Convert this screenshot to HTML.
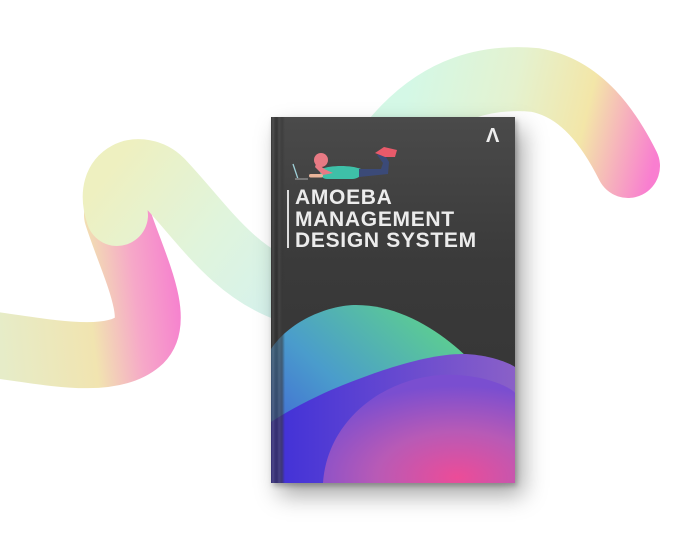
<!DOCTYPE html>
<html><head><meta charset="utf-8"><style>
html,body{margin:0;padding:0;background:#fff;width:694px;height:548px;overflow:hidden;position:relative}
svg{position:absolute;left:0;top:0}
.book{position:absolute;left:271px;top:117px;width:244px;height:366px;background:linear-gradient(180deg,#4a4a4a 0%,#3a3a3a 40%,#333 100%);overflow:hidden;box-shadow:8px 12px 22px rgba(0,0,0,.35),2px 3px 5px rgba(0,0,0,.25)}
.spine{position:absolute;left:0;top:0;width:14px;height:100%;background:linear-gradient(90deg,#2a2a2a 0,#555 2px,#333 4px,#2c2c2c 6px,#4a4a4a 8px,#383838 11px,rgba(60,60,60,0) 14px);z-index:3;opacity:.6}
.title{position:absolute;left:24px;top:70px;color:#ececec;font:bold 21px/21.5px "Liberation Sans",sans-serif;letter-spacing:0.7px;z-index:4}
.bar{position:absolute;left:16px;top:73px;width:2px;height:58px;background:#ddd;z-index:4}
.logo{position:absolute;left:215px;top:8px;color:#eee;font:bold 20px "Liberation Sans",sans-serif;z-index:4}
</style></head><body>
<svg width="694" height="548" viewBox="0 0 694 548">
<defs>
<linearGradient id="g1" gradientUnits="userSpaceOnUse" x1="0" y1="340" x2="185" y2="320">
<stop offset="0" stop-color="#e6ecc8"/><stop offset=".5" stop-color="#f1e4b0"/><stop offset=".75" stop-color="#f6a8c8"/><stop offset="1" stop-color="#f67fcf"/></linearGradient>
<linearGradient id="g2" gradientUnits="userSpaceOnUse" x1="110" y1="170" x2="280" y2="300">
<stop offset="0" stop-color="#eef0c0"/><stop offset=".55" stop-color="#e0f4dc"/><stop offset="1" stop-color="#d6f2ec"/></linearGradient>
<linearGradient id="g3" gradientUnits="userSpaceOnUse" x1="400" y1="120" x2="650" y2="180">
<stop offset="0" stop-color="#d4f8e6"/><stop offset=".4" stop-color="#e4f2d0"/><stop offset=".7" stop-color="#f3e6a8"/><stop offset="1" stop-color="#f97ed0"/></linearGradient>
</defs>
<path d="M-20 343 C40 350,110 368,140 340 C162 318,132 262,117 215" fill="none" stroke="url(#g1)" stroke-width="66" stroke-linecap="round"/>
<path d="M117 215 C102 170,142 160,162 180 C202 222,232 272,290 292" fill="none" stroke="url(#g2)" stroke-width="62" stroke-linecap="round"/>
<path d="M395 138 C440 85,490 76,535 80 C582 88,610 130,628 166" fill="none" stroke="url(#g3)" stroke-width="64" stroke-linecap="round"/>
</svg>
<div class="book">
<div class="spine"></div>
<div class="logo">Λ</div>
<svg width="244" height="366" viewBox="0 0 244 366" style="z-index:2">
<defs>
<linearGradient id="t" x1="0" y1="1" x2="1" y2="0"><stop offset="0" stop-color="#3d52d8"/><stop offset=".45" stop-color="#4a9ccc"/><stop offset="1" stop-color="#62dc80"/></linearGradient>
<linearGradient id="v" x1="0" y1="0" x2="1" y2="0"><stop offset="0" stop-color="#4030d8"/><stop offset="1" stop-color="#8a60c8"/></linearGradient>
<radialGradient id="p" cx=".7" cy=".95" r=".85"><stop offset="0" stop-color="#ec4c98"/><stop offset=".5" stop-color="#b85ab6"/><stop offset="1" stop-color="#7a4ed0"/></radialGradient>
</defs>
<path d="M0 232 C20 202,60 188,85 188 C130 188,170 215,196 240 L196 366 L0 366Z" fill="url(#t)"/>
<path d="M0 305 C20 292,40 282,60 273 C110 252,160 236,195 237 C215 238,235 244,244 250 L244 366 L0 366Z" fill="url(#v)"/>
<path d="M52 366 C56 305,110 262,170 258 C210 256,240 270,244 276 L244 366Z" fill="url(#p)"/>
<path d="M22 47 L27 62 L36 62" fill="none" stroke="#9fd0d8" stroke-width="1.3"/>
<rect x="24" y="61" width="13" height="2" fill="#777"/>
<path d="M50 52 C60 48,80 48,90 52 C92 58,88 62,80 62 L56 62 C50 62,48 56,50 52Z" fill="#3ec0a8"/>
<path d="M88 52 L110 52 L112 46 L106 38 L112 35 L118 45 L117 57 L88 60Z" fill="#3b4a78"/>
<path d="M104 36 L113 30 L126 33 L124 40 L114 40Z" fill="#e85a6a"/>
<circle cx="50" cy="43" r="7" fill="#e87a84"/>
<path d="M46 44 C50 52,58 54,62 56 L52 58 L44 50Z" fill="#e87a84"/>
<rect x="38" y="57" width="14" height="3.5" rx="1.7" fill="#e9b49a"/>
</svg>
<div class="bar"></div>
<div class="title">AMOEBA<br>MANAGEMENT<br>DESIGN SYSTEM</div>
</div>
</body></html>
